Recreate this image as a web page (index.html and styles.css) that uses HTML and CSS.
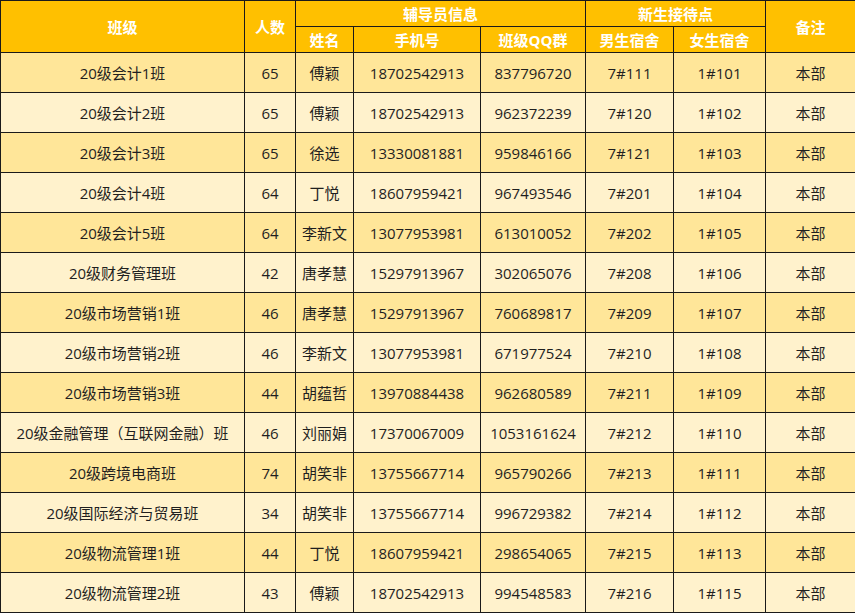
FILE: index.html
```html
<!DOCTYPE html>
<html lang="zh-CN">
<head>
<meta charset="utf-8">
<title>新生班级信息</title>
<link rel="stylesheet" href="styles.css">
</head>
<body>
<table class="info">
<colgroup>
<col class="c-class"><col class="c-num"><col class="c-name"><col class="c-phone"><col class="c-qq"><col class="c-boy"><col class="c-girl"><col class="c-note">
</colgroup>
<thead>
<tr class="h1">
<th rowspan="2">班级</th>
<th rowspan="2">人数</th>
<th colspan="3">辅导员信息</th>
<th colspan="2">新生接待点</th>
<th rowspan="2">备注</th>
</tr>
<tr class="h2">
<th>姓名</th><th>手机号</th><th>班级QQ群</th><th>男生宿舍</th><th>女生宿舍</th>
</tr>
</thead>
<tbody>
<tr><td>20级会计1班</td><td>65</td><td>傅颖</td><td>18702542913</td><td>837796720</td><td>7#111</td><td>1#101</td><td>本部</td></tr>
<tr><td>20级会计2班</td><td>65</td><td>傅颖</td><td>18702542913</td><td>962372239</td><td>7#120</td><td>1#102</td><td>本部</td></tr>
<tr><td>20级会计3班</td><td>65</td><td>徐选</td><td>13330081881</td><td>959846166</td><td>7#121</td><td>1#103</td><td>本部</td></tr>
<tr><td>20级会计4班</td><td>64</td><td>丁悦</td><td>18607959421</td><td>967493546</td><td>7#201</td><td>1#104</td><td>本部</td></tr>
<tr><td>20级会计5班</td><td>64</td><td>李新文</td><td>13077953981</td><td>613010052</td><td>7#202</td><td>1#105</td><td>本部</td></tr>
<tr><td>20级财务管理班</td><td>42</td><td>唐孝慧</td><td>15297913967</td><td>302065076</td><td>7#208</td><td>1#106</td><td>本部</td></tr>
<tr><td>20级市场营销1班</td><td>46</td><td>唐孝慧</td><td>15297913967</td><td>760689817</td><td>7#209</td><td>1#107</td><td>本部</td></tr>
<tr><td>20级市场营销2班</td><td>46</td><td>李新文</td><td>13077953981</td><td>671977524</td><td>7#210</td><td>1#108</td><td>本部</td></tr>
<tr><td>20级市场营销3班</td><td>44</td><td>胡蕴哲</td><td>13970884438</td><td>962680589</td><td>7#211</td><td>1#109</td><td>本部</td></tr>
<tr><td>20级金融管理（互联网金融）班</td><td>46</td><td>刘丽娟</td><td>17370067009</td><td>1053161624</td><td>7#212</td><td>1#110</td><td>本部</td></tr>
<tr><td>20级跨境电商班</td><td>74</td><td>胡笑非</td><td>13755667714</td><td>965790266</td><td>7#213</td><td>1#111</td><td>本部</td></tr>
<tr><td>20级国际经济与贸易班</td><td>34</td><td>胡笑非</td><td>13755667714</td><td>996729382</td><td>7#214</td><td>1#112</td><td>本部</td></tr>
<tr><td>20级物流管理1班</td><td>44</td><td>丁悦</td><td>18607959421</td><td>298654065</td><td>7#215</td><td>1#113</td><td>本部</td></tr>
<tr><td>20级物流管理2班</td><td>43</td><td>傅颖</td><td>18702542913</td><td>994548583</td><td>7#216</td><td>1#115</td><td>本部</td></tr>
</tbody>
</table>
</body>
</html>
```

FILE: styles.css
```css
html, body {
  margin: 0;
  padding: 0;
  background: #ffffff;
}

.info {
  border-collapse: collapse;
  table-layout: fixed;
  width: 855px;
  font-family: "Open Sans", "Noto Sans CJK SC", sans-serif;
  font-size: 15px;
  color: #1f1f1f;
}

.c-class { width: 244px; }
.c-num { width: 51px; }
.c-name { width: 58px; }
.c-phone { width: 127px; }
.c-qq { width: 105px; }
.c-boy { width: 88px; }
.c-girl { width: 92px; }
.c-note { width: 90px; }

.info th,
.info td {
  border: 1px solid #1a1a1a;
  padding: 0;
  text-align: center;
  vertical-align: middle;
  white-space: nowrap;
  overflow: hidden;
}

.info th {
  background: #ffc000;
  color: #ffffff;
  font-weight: bold;
  font-size: 15px;
  line-height: 18px;
}

.info .h1 th,
.info .h2 th {
  height: 25px;
}

.info td {
  height: 39px;
  line-height: 20px;
}

.info tbody tr:nth-child(odd) td {
  background: #ffe699;
}

.info tbody tr:nth-child(even) td {
  background: #fff2cc;
}
```
